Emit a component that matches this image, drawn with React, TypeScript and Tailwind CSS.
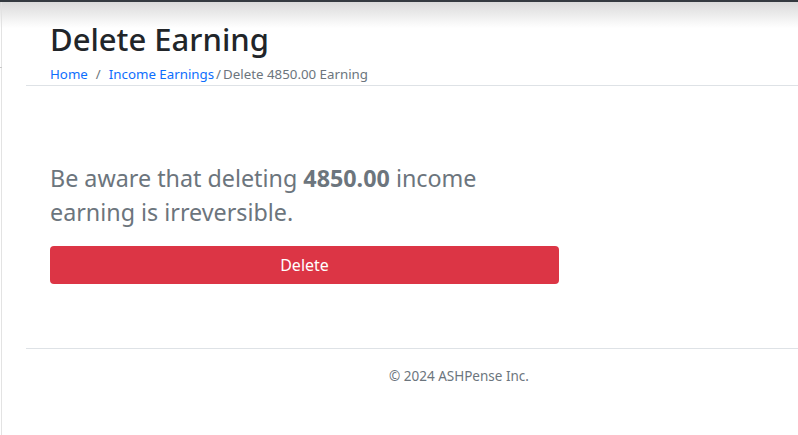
export default function App() {
  return (
    <div className="relative w-[798px] h-[435px] overflow-hidden bg-white font-['Noto_Sans',sans-serif]">
      {/* top bar + shadow */}
      <div className="h-[2px] bg-[#343a40]" />
      <div className="absolute left-0 right-0 top-[2px] h-[26px] bg-gradient-to-b from-[#dadada] to-white/0 pointer-events-none" />

      <div className="flex h-[433px]">
        {/* collapsed sidebar edge */}
        <div className="relative w-[2px] border-r border-[#e3e3e3]">
          <div className="absolute left-0 top-[65px] w-[2px] h-[1px] bg-[#c8c8c8]" />
        </div>

        <div className="flex-1 pl-[24px] flex flex-col">
          {/* header */}
          <div className="border-b border-[#dee2e6] pl-[24px] pt-[17px] pb-[1px]">
            <h1 className="text-[31px] leading-[40px] font-medium text-[#212529]">Delete Earning</h1>
            <nav className="mt-[5px] text-[13.3px] leading-[20px] text-[#6c757d] flex items-center">
              <a className="text-[#0d6efd]">Home</a>
              <span className="px-[8px]">/</span>
              <a className="text-[#0d6efd]">Income Earnings</a>
              <span className="px-[2px]">/</span>
              <span>Delete 4850.00 Earning</span>
            </nav>
          </div>

          {/* body */}
          <div className="pl-[24px] pt-[75px] h-[262px]">
            <p className="w-[470px] text-[23.3px] leading-[34px] text-[#6c757d]">
              Be aware that deleting <b className="font-bold">4850.00</b> income earning is irreversible.
            </p>
            <button className="mt-[17px] w-[509px] h-[38px] rounded-[4px] bg-[#dc3545] text-white text-[16px]">
              Delete
            </button>
          </div>

          {/* footer */}
          <div className="border-t border-[#dee2e6] pt-[17px] pl-[363px] text-[13.5px] text-[#6c757d]">
            © 2024 ASHPense Inc.
          </div>
        </div>
      </div>
    </div>
  )
}
